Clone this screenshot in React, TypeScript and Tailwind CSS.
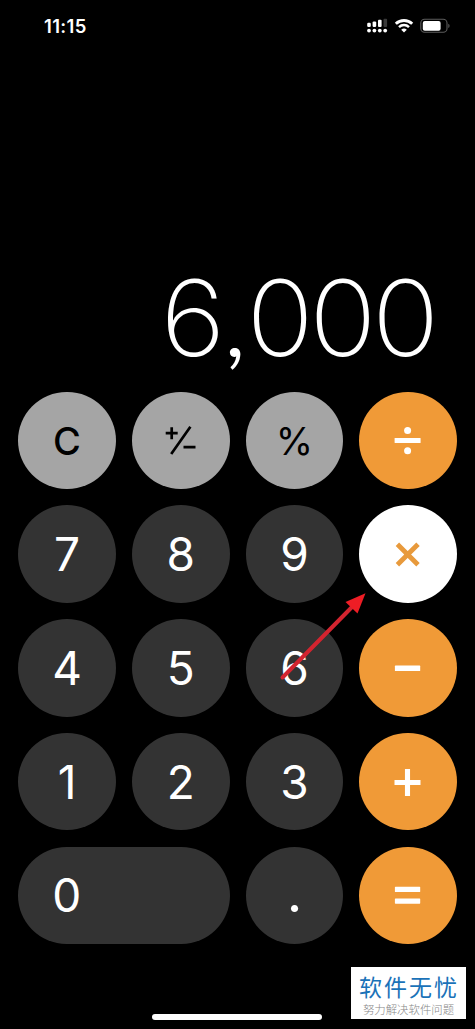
import { clsx } from "clsx";
import type { ReactNode } from "react";

type KeyKind = "digit" | "function" | "operator" | "active";

interface CalcKey {
  id: string;
  kind: KeyKind;
  label: ReactNode;
  wide?: boolean;
}

const glyph = "w-10 h-10 overflow-visible";

const PlusMinus = () => (
  <svg viewBox="0 0 40 40" className={glyph} fill="none" stroke="currentColor" strokeWidth="2.7">
    <path d="M4.7 13.2h12M10.7 7.2v12M29.4 6.8 10.2 34M22.5 27.1h12" />
  </svg>
);

const Divide = () => (
  <svg viewBox="0 0 40 40" className={glyph} fill="currentColor">
    <circle cx="19.6" cy="10.4" r="3.5" />
    <rect x="6.6" y="18" width="26" height="5" rx="0.6" />
    <circle cx="19.6" cy="30.7" r="3.5" />
  </svg>
);

const Times = () => (
  <svg viewBox="0 0 40 40" className={glyph} fill="none" stroke="currentColor" strokeWidth="4.8">
    <path d="m9.4 10.2 20.6 20.6M30 10.2 9.4 30.8" />
  </svg>
);

const Minus = () => (
  <svg viewBox="0 0 40 40" className={glyph} fill="currentColor">
    <rect x="6.9" y="17.6" width="25.3" height="5.5" rx="0.6" />
  </svg>
);

const Plus = () => (
  <svg viewBox="0 0 40 40" className={glyph} fill="none" stroke="currentColor" strokeWidth="5.1">
    <path d="M6.5 20.5h26M19.5 7v27" />
  </svg>
);

const Equals = () => (
  <svg viewBox="0 0 40 40" className={glyph} fill="currentColor">
    <rect x="6.9" y="11.8" width="25.3" height="5.2" rx="0.6" />
    <rect x="6.9" y="23.5" width="25.3" height="5.2" rx="0.6" />
  </svg>
);

const keys: CalcKey[] = [
  { id: "clear", kind: "function", label: <span className="pt-[1px] text-[38px] font-medium">C</span> },
  { id: "sign", kind: "function", label: <PlusMinus /> },
  { id: "percent", kind: "function", label: <span className="pt-[1px] text-[38px]">%</span> },
  { id: "divide", kind: "operator", label: <Divide /> },
  { id: "7", kind: "digit", label: "7" },
  { id: "8", kind: "digit", label: "8" },
  { id: "9", kind: "digit", label: "9" },
  { id: "times", kind: "active", label: <Times /> },
  { id: "4", kind: "digit", label: "4" },
  { id: "5", kind: "digit", label: "5" },
  { id: "6", kind: "digit", label: "6" },
  { id: "minus", kind: "operator", label: <Minus /> },
  { id: "1", kind: "digit", label: "1" },
  { id: "2", kind: "digit", label: "2" },
  { id: "3", kind: "digit", label: "3" },
  { id: "plus", kind: "operator", label: <Plus /> },
  { id: "0", kind: "digit", label: "0", wide: true },
  { id: "point", kind: "digit", label: <span className="pb-[5px] text-[54px]">.</span> },
  { id: "equals", kind: "operator", label: <Equals /> },
];

const keyStyles: Record<KeyKind, string> = {
  digit: "bg-[#333333] text-white",
  function: "bg-[#a5a5a5] text-black",
  operator: "bg-[#f09a37] text-white",
  active: "bg-white text-[#e89a3c]",
};

function KeyButton({ kind, label, wide }: CalcKey) {
  return (
    <button
      type="button"
      className={clsx(
        "flex h-[97.5px] items-center rounded-full text-[46px] leading-none",
        keyStyles[kind],
        wide ? "col-span-2 justify-start pl-[34px]" : "justify-center",
      )}
    >
      {label}
    </button>
  );
}

function StatusBar() {
  return (
    <header className="flex h-[52px] items-center justify-between pl-[44px] pr-[24.5px]">
      <span className="pt-[1px] text-[18.5px] font-semibold tracking-[0.35px]">11:15</span>
      <div className="flex items-center">
        <svg viewBox="0 0 22 16" className="h-4 w-[22px]" fill="white">
          <circle cx="3" cy="12.6" r="1.9" />
          <circle cx="8.4" cy="12.6" r="1.9" />
          <circle cx="13.8" cy="12.6" r="1.9" />
          <circle cx="19.2" cy="12.6" r="1.9" />
          <rect x="1.2" y="4.8" width="3.6" height="4.2" rx="1.2" />
          <rect x="6.6" y="3.4" width="3.6" height="5.6" rx="1.2" />
          <rect x="12" y="1.8" width="3.6" height="7.2" rx="1" />
          <rect x="17.5" y="0.8" width="3.6" height="8.2" rx="1" fill="#3a3a3a" />
        </svg>
        <svg viewBox="0 0 20 16" className="ml-[6px] h-4 w-5" fill="none" stroke="white">
          <path d="M1.8 5.7a12 12 0 0 1 16.4 0" strokeWidth="2.9" />
          <path d="M5 9.1a7.3 7.3 0 0 1 10 0" strokeWidth="2.5" />
          <path d="M7.2 11.7a4.2 4.2 0 0 1 5.6 0L10 14.6z" fill="white" stroke="none" />
        </svg>
        <svg viewBox="0 0 32 16" className="ml-[5px] h-4 w-8">
          <rect x="1.8" y="1.3" width="26.2" height="13" rx="3.8" fill="none" stroke="#5c5c5c" strokeWidth="1.1" />
          <rect x="3.8" y="3" width="17.8" height="9.8" rx="2" fill="white" />
          <path d="M29.3 5.8c1.7.6 1.7 3.6 0 4.2z" fill="#5c5c5c" />
        </svg>
      </div>
    </header>
  );
}

function Arrow() {
  return (
    <svg viewBox="0 0 90 92" className="pointer-events-none absolute left-[278px] top-[590px] h-[92px] w-[90px]">
      <path d="M4.5 87.5 75 16" stroke="#d3242f" strokeWidth="4" fill="none" strokeLinecap="round" />
      <path d="M87.5 3.2 67.5 12 79.5 23.6z" fill="#ee1d25" />
    </svg>
  );
}

function Watermark() {
  return (
    <div className="absolute left-[351px] top-[967px] flex h-[52px] w-[115px] flex-col items-center whitespace-nowrap bg-white font-['Noto_Sans_CJK_SC',sans-serif]">
      <p className="mt-[7px] pl-[1px] text-[23px] leading-[24px] tracking-[2px] text-[#1a72b8]">软件无忧</p>
      <p className="mt-[4px] text-[11.4px] leading-[14px] font-light text-[#888888]">努力解决软件问题</p>
    </div>
  );
}

export default function App() {
  return (
    <main className="relative flex h-[1029px] w-[475px] flex-col overflow-hidden bg-black font-['Inter',sans-serif] text-white [font-feature-settings:'ss03']">
      <StatusBar />
      <div className="flex h-[339.5px] items-end justify-end pr-[40.5px] pb-[21px]">
        <output className="origin-right scale-x-[1.06] text-[105px] leading-[106px] font-[250] tracking-[-4.2px]">
          <span className="tracking-[-3px]">6</span>
          <span className="text-[86px] leading-none font-light tracking-[-1.3px]">,</span>
          000
        </output>
      </div>
      <section className="grid grid-cols-[repeat(4,97.7px)] gap-x-4 gap-y-[16.25px] pl-[18.2px]">
        {keys.map((key) => (
          <KeyButton key={key.id} {...key} />
        ))}
      </section>
      <footer className="mt-auto flex justify-center pr-[0.6px] pb-[9px]">
        <div className="h-[6px] w-[170px] rounded-full bg-white" />
      </footer>
      <Arrow />
      <Watermark />
    </main>
  );
}
